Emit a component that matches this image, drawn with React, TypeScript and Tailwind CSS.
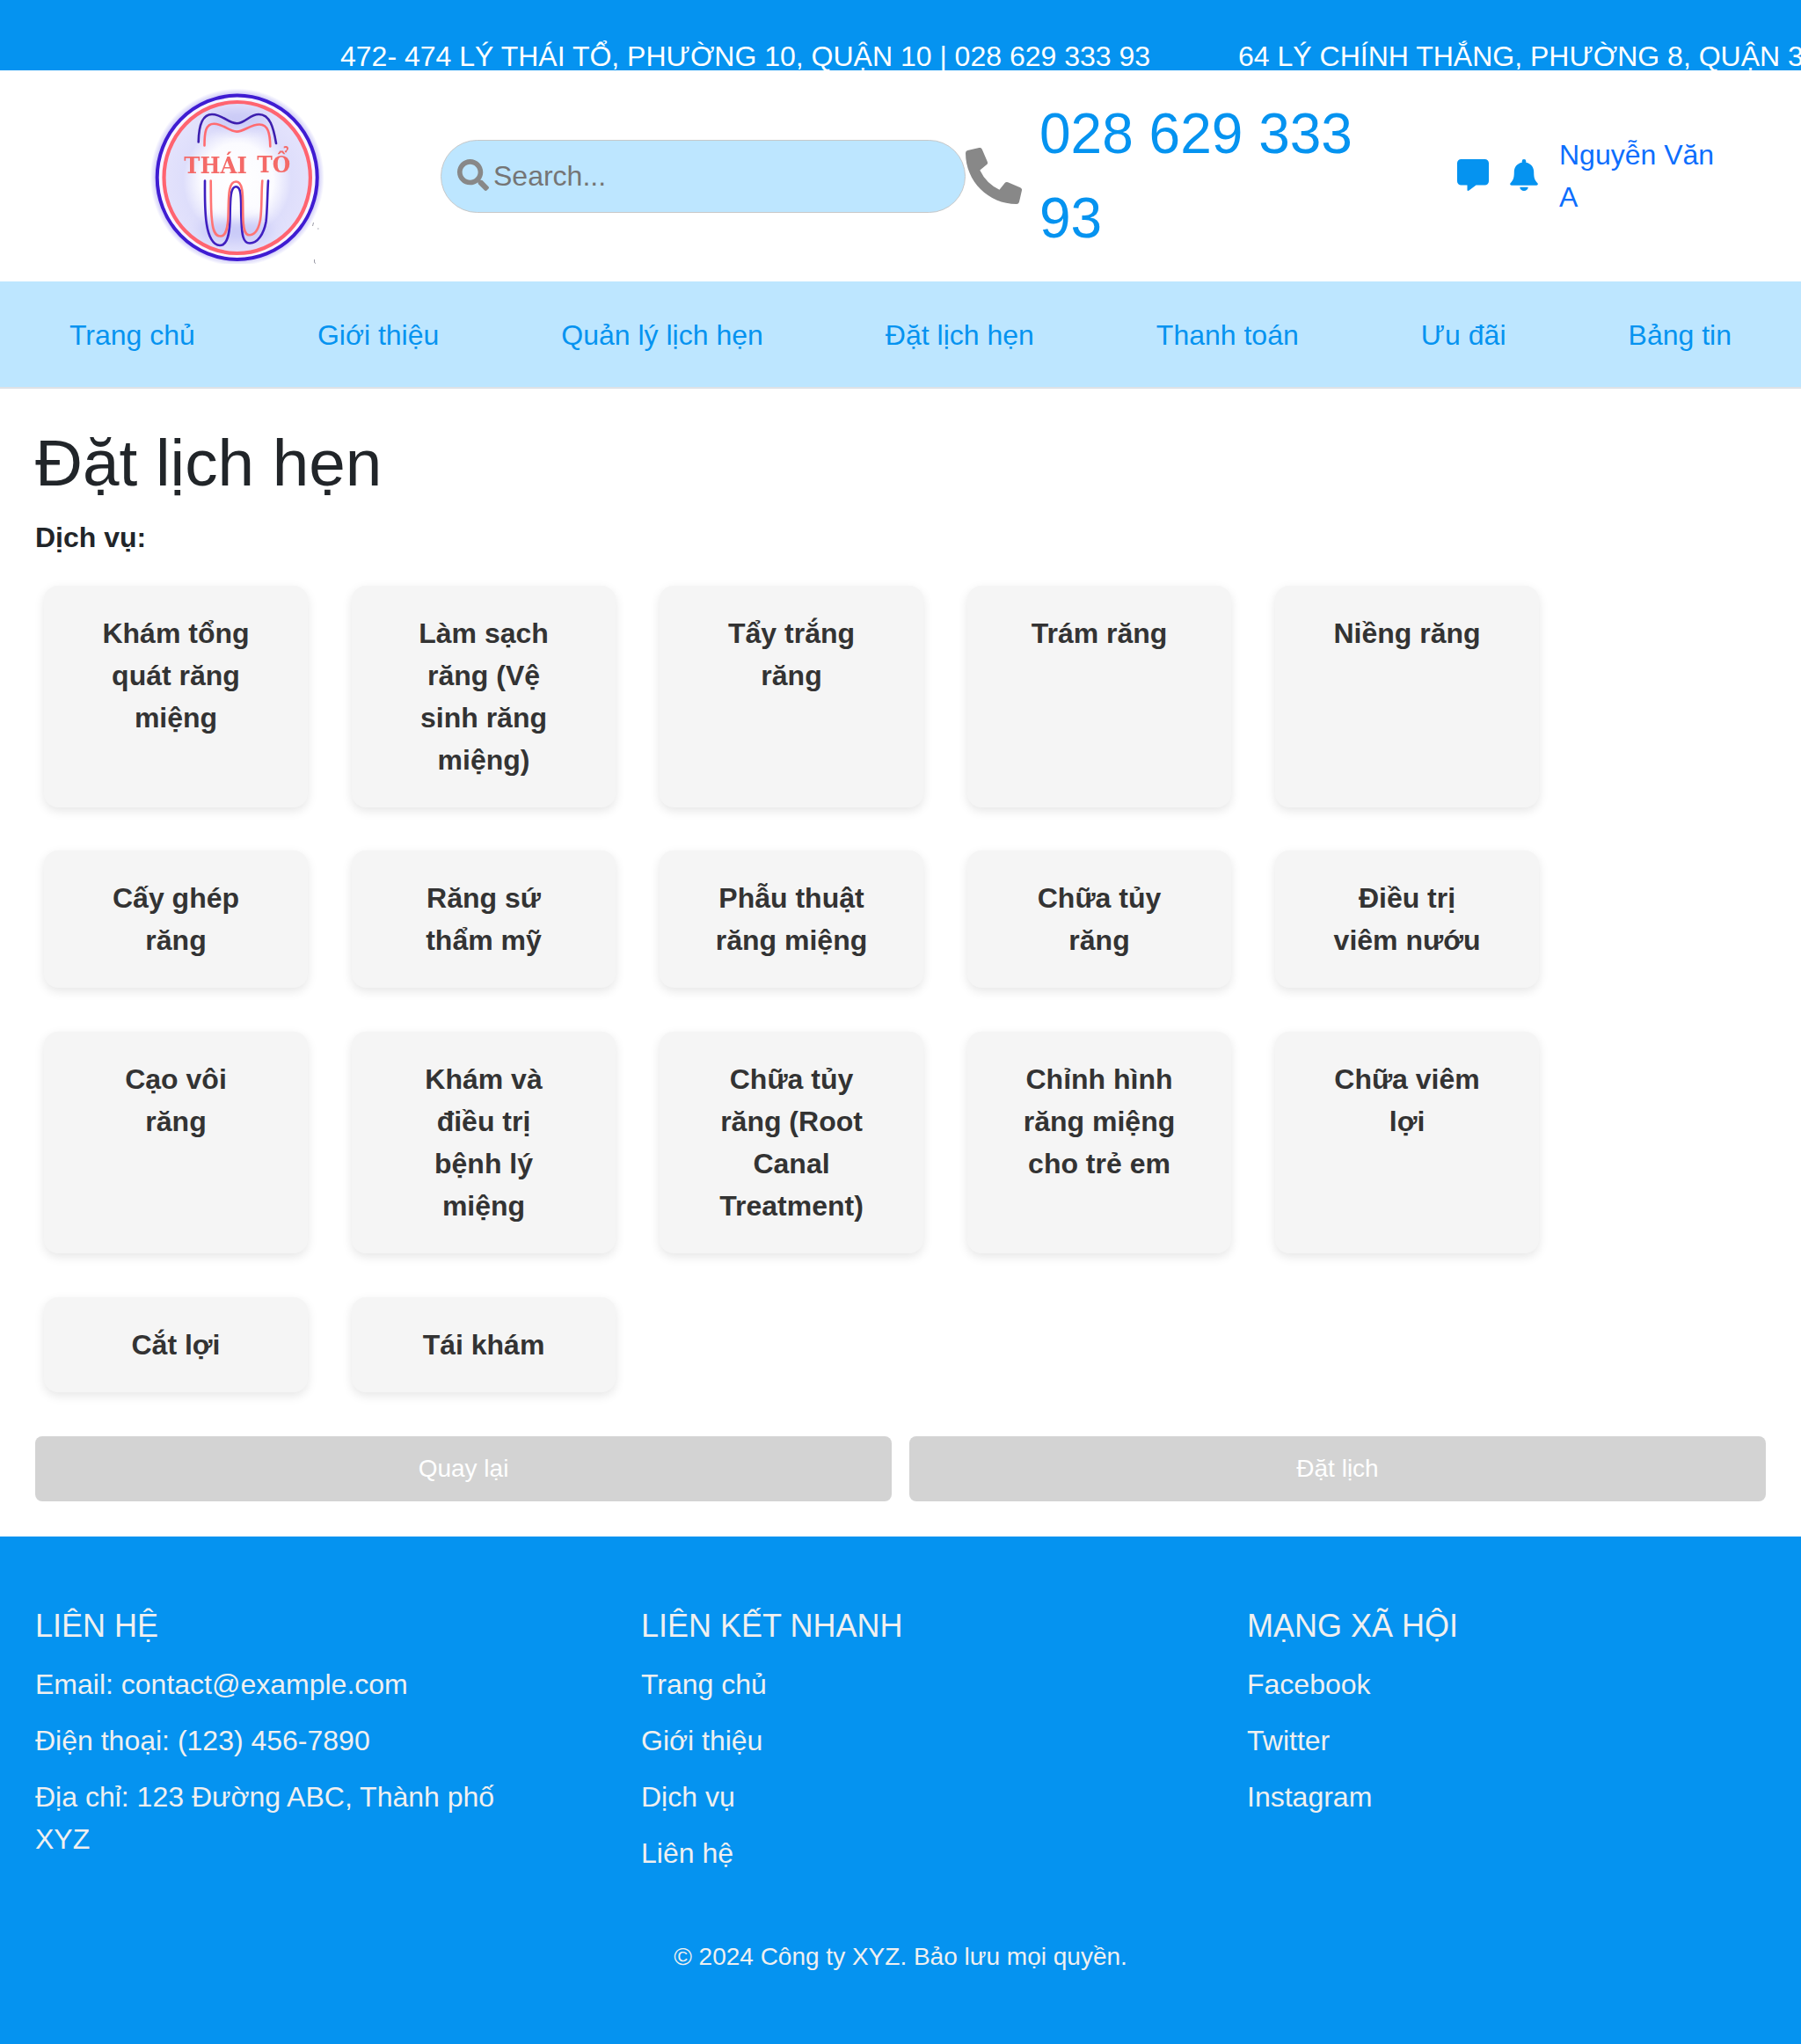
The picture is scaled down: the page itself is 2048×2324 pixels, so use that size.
import { FaPhoneAlt, FaSearch } from "react-icons/fa";

const nav = ["Trang chủ", "Giới thiệu", "Quản lý lịch hẹn", "Đặt lịch hẹn", "Thanh toán", "Ưu đãi", "Bảng tin"];

const services = [
  "Khám tổng quát răng miệng",
  "Làm sạch răng (Vệ sinh răng miệng)",
  "Tẩy trắng răng",
  "Trám răng",
  "Niềng răng",
  "Cấy ghép răng",
  "Răng sứ thẩm mỹ",
  "Phẫu thuật răng miệng",
  "Chữa tủy răng",
  "Điều trị viêm nướu",
  "Cạo vôi răng",
  "Khám và điều trị bệnh lý miệng",
  "Chữa tủy răng (Root Canal Treatment)",
  "Chỉnh hình răng miệng cho trẻ em",
  "Chữa viêm lợi",
  "Cắt lợi",
  "Tái khám",
];

const footer = [
  { title: "LIÊN HỆ", items: ["Email: contact@example.com", "Điện thoại: (123) 456-7890", "Địa chỉ: 123 Đường ABC, Thành phố XYZ"] },
  { title: "LIÊN KẾT NHANH", items: ["Trang chủ", "Giới thiệu", "Dịch vụ", "Liên hệ"] },
  { title: "MẠNG XÃ HỘI", items: ["Facebook", "Twitter", "Instagram"] },
];

function Logo() {
  return (
    <svg viewBox="0 0 200 200" className="h-[200px] w-[200px] shrink-0 blur-[0.6px]" fill="none">
      <defs>
        <radialGradient id="halo" cx="0.5" cy="0.5" r="0.5">
          <stop offset="0.92" stopColor="#c4c0f6" />
          <stop offset="1" stopColor="#ffffff" />
        </radialGradient>
        <radialGradient id="glow" cx="0.5" cy="0.52" r="0.5">
          <stop offset="0" stopColor="#ffffff" />
          <stop offset="0.5" stopColor="#fbfbff" />
          <stop offset="0.75" stopColor="#dedefb" />
          <stop offset="1" stopColor="#e3e2fc" />
        </radialGradient>
        <filter id="soft" x="-30%" y="-60%" width="160%" height="220%">
          <feGaussianBlur stdDeviation="8" />
        </filter>
      </defs>
      <ellipse cx="99.7" cy="101.5" rx="99" ry="101" fill="url(#halo)" />
      <ellipse cx="99.7" cy="101.8" rx="90" ry="92" fill="#f8f6ff" />
      <ellipse cx="99.7" cy="102" rx="82" ry="85" fill="url(#glow)" />
      <ellipse cx="99.7" cy="35" rx="35" ry="10" fill="#c6c6f5" filter="url(#soft)" />
      <ellipse cx="97" cy="162" rx="42" ry="12" fill="#c6c7f8" filter="url(#soft)" />
      <ellipse cx="99.7" cy="101.8" rx="91" ry="93.2" stroke="#3f1cd2" strokeWidth="4" />
      <ellipse cx="99.7" cy="102" rx="83.2" ry="86" stroke="#ff6470" strokeWidth="4.2" />
      <g strokeWidth="2.600" strokeLinecap="round" strokeLinejoin="round">
        <path d="M55.700 61.500C56 42 60 30 71 30C83 30 89 40 99.300 40.300C109 40 114 30 124.300 30C137 30 141 45 144 63" stroke="#3d1fae" />
        <path d="M62.500 65.500C62.500 50 64 40.700 73.300 40.700C84 40.700 90 49.300 99.300 49.600C108 49.300 115 41.500 125 41.500C135 41.500 137 52 137.300 66.500" stroke="#ff6b70" />
        <path d="M63 105.500C63 120 62.500 140 65 155C67 168 72 179 80 179C89 179 91 165 91.500 150C92 132 91 112.300 98.300 112.300C106 112.300 103.500 132 104.500 150C105 166 106 176.500 114 176.500C123 176.500 130 166 132.500 152C134 140 134 120 135 105.500" stroke="#3f1fc0" />
        <path d="M69.700 105.500C70 120 69.500 138 71 150C72 161 74 168.500 80.700 168.500C87 168.500 88.500 160 89.300 150C90.500 130 88 106.500 98.300 106.500C108.500 106.500 105.500 130 106.500 150C107 160 108 167.200 113.300 167.200C120 167.200 124 161 126 150C128 138 127 120 128.300 105.500" stroke="#ff7474" />
      </g>
      <text x="39.300" y="97" fontFamily="DejaVu Serif, serif" fontWeight="700" fontSize="26.500" fill="#f46a68" textLength="71.500" lengthAdjust="spacingAndGlyphs">THÁI</text>
      <text x="122.300" y="95.700" fontFamily="DejaVu Serif, serif" fontWeight="700" fontSize="26.500" fill="#f46a68" textLength="38" lengthAdjust="spacingAndGlyphs">TỔ</text>
      <path d="M185.500 157l1-4M191 160h1.500M187.500 195v3.500l1.500 1" stroke="#8e8e9c" strokeWidth="0.900" />
    </svg>
  );
}

function ChatIcon() {
  return (
    <svg viewBox="0 0 36 36" className="h-9 w-9" fill="#0593f0">
      <path d="M4.500 0h27a4.500 4.500 0 0 1 4.500 4.500v20.500a4.500 4.500 0 0 1-4.500 4.500h-10L13.500 35.600Q11.500 36.500 11.500 35v-5.500h-7A4.500 4.500 0 0 1 0 25V4.500A4.500 4.500 0 0 1 4.500 0z" />
    </svg>
  );
}

function BellIcon() {
  return (
    <svg viewBox="0 0 32 36" className="h-9 w-8" fill="#0593f0">
      <path d="M16 0a2.300 2.300 0 0 1 2.300 2.300v1.400C24 4.800 27.200 9 27.200 14.500c0 7 1 9.500 4.200 12.700.9 1.200.3 2.600-1.200 2.600H1.800c-1.500 0-2.100-1.400-1.200-2.600 3.200-3.200 4.200-5.700 4.200-12.700C4.800 9 8 4.800 13.700 3.700V2.300A2.300 2.300 0 0 1 16 0zM11.300 31.700h9.400a4.700 4.300 0 0 1-9.400 0z" />
    </svg>
  );
}

export default function App() {
  return (
    <div className="min-h-[2324px] w-[2048px] overflow-hidden bg-white font-['Liberation_Sans',Arial,sans-serif] text-[32px] leading-[48px] text-[#212529]">
      <div className="flex h-20 gap-[100px] overflow-hidden whitespace-nowrap bg-[#0593f0] pt-10 pl-[387px] text-white">
        <span>472- 474 LÝ THÁI TỔ, PHƯỜNG 10, QUẬN 10 | 028 629 333 93</span>
        <span>64 LÝ CHÍNH THẮNG, PHƯỜNG 8, QUẬN 3</span>
      </div>

      <header className="flex h-60 items-center pl-[170px]">
        <Logo />
        <div className="ml-[131px] flex h-[83px] w-[597px] items-center rounded-full border border-[#c8c8c8] bg-[#bde6ff] pl-[18px]">
          <FaSearch className="-mt-[3px] h-9 w-9 text-[#888888]" />
          <span className="ml-[5px] text-[#757575]">Search...</span>
        </div>
        <FaPhoneAlt className="h-16 w-16 text-[#888888]" />
        <p className="ml-5 w-[400px] text-[64px] leading-[96px] text-[#0593f0]">028 629 333 93</p>
        <div className="ml-[75px] flex items-center">
          <div className="-mt-[2px] flex items-center gap-6">
            <ChatIcon />
            <BellIcon />
          </div>
          <span className="ml-6 w-[200px] text-[#0d6efd]">Nguyễn Văn A</span>
        </div>
      </header>

      <nav className="flex h-[122px] items-center justify-between border-b-2 border-[#dee2e6] bg-[#bde6ff] px-[79px] pt-[2px] text-[#0593f0]">
        {nav.map((n) => (
          <span key={n}>{n}</span>
        ))}
      </nav>

      <main className="px-10 pt-[39px]">
        <h1 className="text-[74.7px] leading-[90px]">Đặt lịch hẹn</h1>
        <p className="mt-[15.600px] font-bold">Dịch vụ:</p>
        <div className="mt-[31px] ml-[10px] grid grid-cols-[repeat(5,300px)] gap-x-[50px] gap-y-[49.8px]">
          {services.map((s) => (
            <div key={s} className="rounded-[16px] bg-[#f5f5f5] px-[59px] py-[30px] text-center font-bold text-[#333333] shadow-[0_4px_12px_rgba(0,0,0,0.1)]">
              {s}
            </div>
          ))}
        </div>
        <div className="mt-[50px] grid grid-cols-2 gap-5 text-center text-[28px] leading-[42px] text-white">
          <button className="h-[74px] rounded-lg bg-[#d3d3d3] pt-px">Quay lại</button>
          <button className="h-[74px] rounded-lg bg-[#d3d3d3] pt-px">Đặt lịch</button>
        </div>
      </main>

      <footer className="mt-10 h-[578px] bg-[#0593f0] px-10 pt-[80px] text-[#f0f0f0]">
        <div className="grid grid-cols-[589px_589px_589px] gap-x-[100px]">
          {footer.map((c) => (
            <div key={c.title}>
              <h5 className="text-[36px] leading-[43px]">{c.title}</h5>
              <ul className="mt-[21px] flex w-[540px] flex-col gap-4">
                {c.items.map((i) => (
                  <li key={i}>{i}</li>
                ))}
              </ul>
            </div>
          ))}
        </div>
        <p className="mt-[73px] text-center text-[28px] leading-[42px]">© 2024 Công ty XYZ. Bảo lưu mọi quyền.</p>
      </footer>
    </div>
  );
}
